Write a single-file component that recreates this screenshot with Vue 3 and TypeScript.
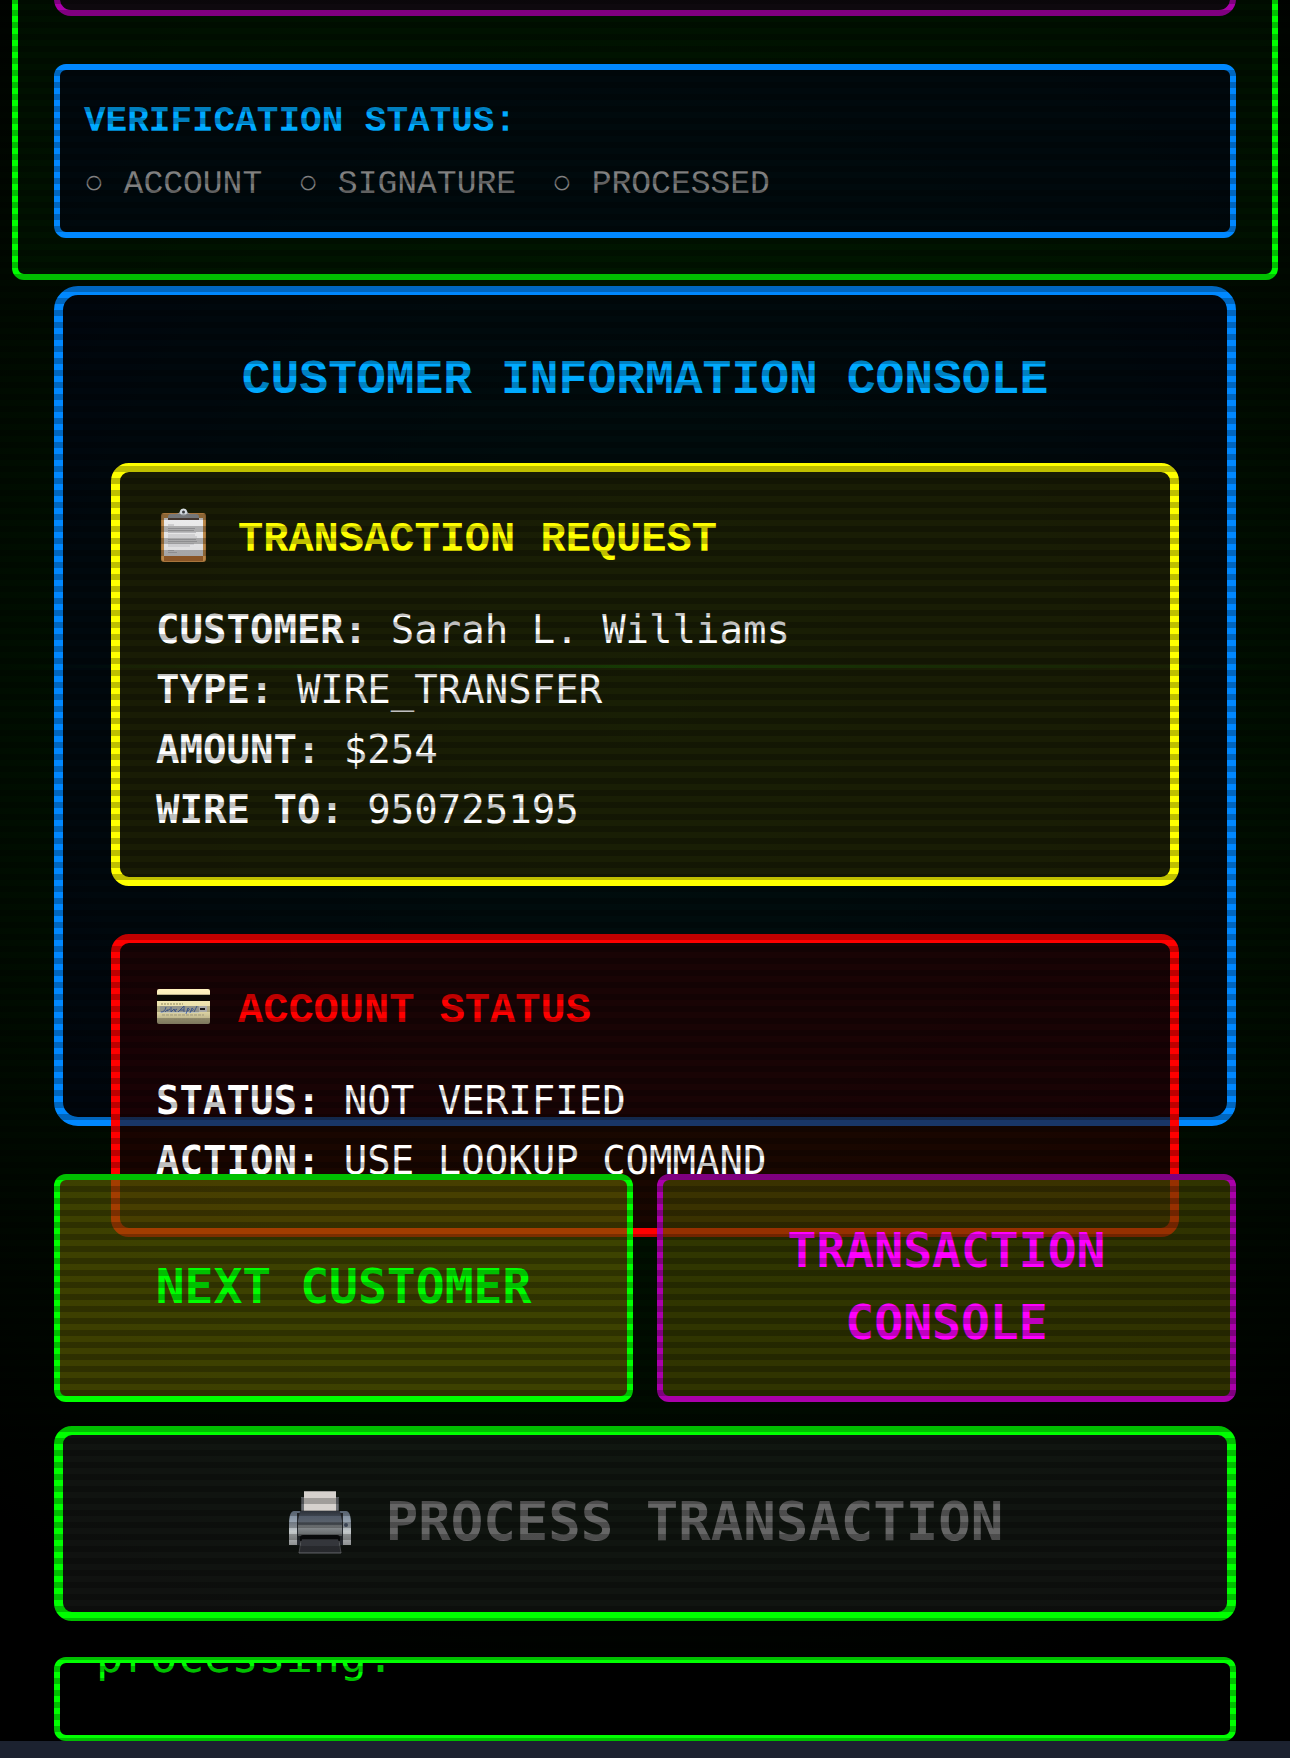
<script setup lang="ts">
interface Field {
  label: string
  value: string
}

const checks: string[] = ['ACCOUNT', 'SIGNATURE', 'PROCESSED']

const request: Field[] = [
  { label: 'CUSTOMER:', value: 'Sarah L. Williams' },
  { label: 'TYPE:', value: 'WIRE_TRANSFER' },
  { label: 'AMOUNT:', value: '$254' },
  { label: 'WIRE TO:', value: '950725195' },
]

const account: Field[] = [
  { label: 'STATUS:', value: 'NOT VERIFIED' },
  { label: 'ACTION:', value: 'USE LOOKUP COMMAND' },
]
</script>

<template>
  <div class="page">
    <main class="screen">
      <section class="header">
        <div class="terminal"></div>
        <div class="verification">
          <h2>VERIFICATION STATUS:</h2>
          <ul>
            <li v-for="check in checks" :key="check">○ {{ check }}</li>
          </ul>
        </div>
      </section>

      <section class="console">
        <h1>CUSTOMER INFORMATION CONSOLE</h1>

        <article class="card request">
          <h3>
            <svg class="icon" viewBox="0 0 54 54" aria-hidden="true">
              <defs>
                <linearGradient id="paper" x1="0" y1="0" x2="0" y2="1">
                  <stop offset="0" stop-color="#ececec" />
                  <stop offset="1" stop-color="#dcdcde" />
                </linearGradient>
              </defs>
              <rect x="5" y="5" width="45" height="49" rx="3" fill="#a8753c" />
              <rect x="6" y="6" width="43" height="47" rx="2" fill="#b98748" />
              <rect x="8" y="48" width="39" height="5" fill="#8a5526" />
              <rect x="8" y="10" width="39" height="38" fill="url(#paper)" />
              <path d="M12 17h6" stroke="#b4b4b6" stroke-width="1" />
              <path d="M12 20.500h27M12 22.500h26M12 24.500h28M12 27h27M12 29h29M12 31.500h28M12 33.500h29M12 36h26M12 38h22M12 42.500h6M12 44.500h9" stroke="#bcbcbf" stroke-width="1" />
              <path d="M12 11V9q0-3 3-3h5q3 0 4-3 3-3 7 0 1 3 4 3h5q3 0 3 3v2z" fill="#9c9ea2" />
              <path d="M12 10h31v2H12z" fill="#5c4a40" />
              <circle cx="27.500" cy="4" r="2.500" fill="#3a3c40" stroke="#d4dae0" stroke-width="2" />
            </svg>
            TRANSACTION REQUEST
          </h3>
          <p v-for="field in request" :key="field.label">
            <strong>{{ field.label }}</strong> {{ field.value }}
          </p>
        </article>

        <article class="card account">
          <h3>
            <svg class="icon" viewBox="0 0 54 54" aria-hidden="true">
              <defs>
                <linearGradient id="plastic" x1="0" y1="0" x2="0" y2="1">
                  <stop offset="0" stop-color="#fff3c0" />
                  <stop offset=".6" stop-color="#e6dca8" />
                  <stop offset="1" stop-color="#a69e7c" />
                </linearGradient>
              </defs>
              <rect x="1" y="10" width="53" height="35" rx="2" fill="url(#plastic)" />
              <rect x="1" y="16" width="53" height="6" fill="#0c0a04" />
              <path d="M5 25h22" stroke="#8b845f" stroke-width="1" stroke-dasharray="2 1" />
              <rect x="4" y="27" width="39" height="7" fill="#c3c6bb" />
              <rect x="43" y="27" width="8" height="6" fill="#e4e4e0" />
              <path d="M44 30h5" stroke="#222" stroke-width="2" />
              <path d="M5 33q4 0 5-5M9 33q4-4 2-1l3-2M15 28v5l3-3 2 3M22 33l6-6v6M24 31h4M30 35l2-6q3 2-1 3M34 34l2-5q3 2-1 3M38 33l3-6M18 32l3-2" fill="none" stroke="#5271b4" stroke-width="1" />
              <path d="M6 36h42M18 41h31" stroke="#b6ae88" stroke-width="2" stroke-dasharray="3 1" />
            </svg>
            ACCOUNT STATUS
          </h3>
          <p v-for="field in account" :key="field.label">
            <strong>{{ field.label }}</strong> {{ field.value }}
          </p>
        </article>
      </section>

      <nav class="actions">
        <button type="button" class="next">NEXT CUSTOMER</button>
        <button type="button" class="toggle">TRANSACTION CONSOLE</button>
      </nav>

      <button type="button" class="process" disabled>
        <svg class="printer" viewBox="0 0 66 66" aria-hidden="true">
          <defs>
            <linearGradient id="side" x1="0" y1="0" x2="0" y2="1">
              <stop offset="0" stop-color="#76869a" />
              <stop offset=".35" stop-color="#98a3b0" />
              <stop offset=".6" stop-color="#c4c9cb" />
              <stop offset="1" stop-color="#8e9091" />
            </linearGradient>
            <linearGradient id="body" x1="0" y1="0" x2="0" y2="1">
              <stop offset="0" stop-color="#3d444e" />
              <stop offset=".2" stop-color="#515a68" />
              <stop offset=".45" stop-color="#59616b" />
              <stop offset=".6" stop-color="#8b9093" />
              <stop offset="1" stop-color="#626567" />
            </linearGradient>
          </defs>
          <rect x="14" y="8" width="38" height="18" fill="#53565a" />
          <path d="M16 9v14M50 9v14" stroke="#85878a" stroke-width="1" />
          <rect x="17" y="2" width="32" height="22" fill="#d6d1cd" />
          <path d="M2 56V36q0-14 5-14h52q5 0 5 14v20z" fill="url(#side)" />
          <path d="M10 24h46v32H10z" fill="#25292f" />
          <path d="M13 22h40l2 10v15H11V32z" fill="url(#body)" />
          <path d="M11 35h44" stroke="#3a4048" stroke-width="1" />
          <path d="M13 49q0-3 3-3h34q3 0 3 3v7H13z" fill="#0b0c0e" />
          <path d="M15 50h36l3 14H12z" fill="#34363b" />
          <path d="M12 64l2-12M54 64l-2-12M12 64h42" stroke="#5b5d60" stroke-width="1" fill="none" />
          <circle cx="59" cy="36" r="2" fill="#4e5a70" />
        </svg>
        PROCESS TRANSACTION
      </button>

      <div class="log" role="log">
        <p>processing.</p>
      </div>

      <div class="sweep"></div>
      <div class="scanlines"></div>
    </main>
    <footer class="toolbar"></footer>
  </div>
</template>

<style>
body {
  margin: 0;
  background: #000;
}
</style>

<style scoped>
.page {
  display: flex;
  flex-direction: column;
  height: 100vh;
  font-family: 'DejaVu Sans Mono', monospace;
}

.screen {
  position: relative;
  flex: 1;
  min-height: 0;
  box-sizing: border-box;
  display: flex;
  flex-direction: column;
  padding: 0 54px;
  overflow: hidden;
  background: radial-gradient(circle farthest-side at 50% 40%, #002200 0%, #000 100%);
}

.toolbar {
  flex: none;
  height: 17px;
  background: #1c2230;
}

h1,
h2,
h3,
p,
ul {
  margin: 0;
  padding: 0;
}

h1,
h2,
h3,
ul {
  font-family: 'Liberation Mono', 'Courier New', monospace;
}

.header {
  flex: none;
  margin: -60px -42px 6px;
  padding: 36px;
  border: 6px solid #0f0;
  border-radius: 12px;
  background: rgba(0, 24, 0, 0.6);
}

.terminal {
  height: 22px;
  margin-bottom: 48px;
  border: 6px solid #a0a;
  border-radius: 18px;
  background: rgba(17, 8, 17, 0.8);
}

.verification {
  padding: 26px 24px 22px;
  border: 6px solid #08f;
  border-radius: 12px;
  background: rgba(0, 4, 22, 0.6);
}

.verification h2 {
  margin-bottom: 12px;
  font-size: 36px;
  line-height: 52px;
  color: #0af;
}

.verification ul {
  display: flex;
  gap: 36px;
  list-style: none;
  font-size: 33px;
  line-height: 50px;
  color: #808080;
}

.console {
  flex: 1 1 0;
  min-height: 0;
  padding: 48px;
  border: 9px solid #08f;
  border-radius: 24px;
  background: rgba(0, 4, 22, 0.6);
}

.console h1 {
  margin-bottom: 46px;
  font-size: 48px;
  line-height: 74px;
  text-align: center;
  color: #0af;
}

.card {
  margin-bottom: 48px;
  padding: 36px 36px 37px;
  border: 9px solid;
  border-radius: 18px;
}

.card h3 {
  display: flex;
  align-items: flex-start;
  gap: 28px;
  margin-bottom: 28px;
  font-size: 42px;
  line-height: 64px;
}

.card p {
  font-size: 39px;
  line-height: 60px;
  color: #fff;
}

.icon {
  flex: none;
  width: 54px;
  height: 54px;
}

.request {
  border-color: #ff0;
  background: rgba(42, 42, 0, 0.6);
  color: #ff0;
}

.account {
  border-color: #f00;
  background: rgba(42, 0, 0, 0.6);
  color: #f00;
}

button {
  font-family: inherit;
  font-weight: bold;
}

.actions {
  position: relative;
  flex: none;
  display: flex;
  gap: 24px;
  margin: 48px 0 24px;
}

.actions button {
  flex: 1 1 0;
  padding: 34px 36px 38px;
  border: 6px solid;
  border-radius: 12px;
  font-size: 48px;
  line-height: 72px;
}

.actions .next {
  border-color: #0f0;
  background: rgba(102, 102, 0, 0.6);
  color: #0f0;
}

.actions .toggle {
  border-color: #a0a;
  background: rgba(80, 80, 0, 0.6);
  color: #f0f;
}

.process {
  flex: none;
  display: flex;
  align-items: center;
  justify-content: center;
  gap: 33px;
  margin-bottom: 36px;
  padding: 49px 36px 53px;
  border: 9px solid #0f0;
  border-radius: 18px;
  background: rgba(32, 36, 32, 0.5);
  color: #666;
  font-size: 54px;
  line-height: 75px;
}

.printer {
  flex: none;
  width: 66px;
  height: 66px;
}

.log {
  flex: none;
  display: flex;
  flex-direction: column;
  justify-content: flex-end;
  height: 30px;
  padding: 0 36px 42px;
  border: 6px solid #0f0;
  border-radius: 12px;
  overflow: hidden;
  background: #000;
  color: #0f0;
  font-size: 45px;
  line-height: 72px;
}

/* CRT effects drawn over the whole screen */
.sweep,
.scanlines {
  position: absolute;
  left: 0;
  right: 0;
  pointer-events: none;
}

.sweep {
  top: 665px;
  height: 3px;
  background: linear-gradient(90deg, transparent, rgba(0, 255, 0, 0.12), transparent);
}

.scanlines {
  top: -2px;
  bottom: 0;
  background: repeating-linear-gradient(
    rgba(0, 0, 0, 0.25) 0,
    rgba(0, 0, 0, 0.25) 6px,
    transparent 6px,
    transparent 12px
  );
}
</style>
